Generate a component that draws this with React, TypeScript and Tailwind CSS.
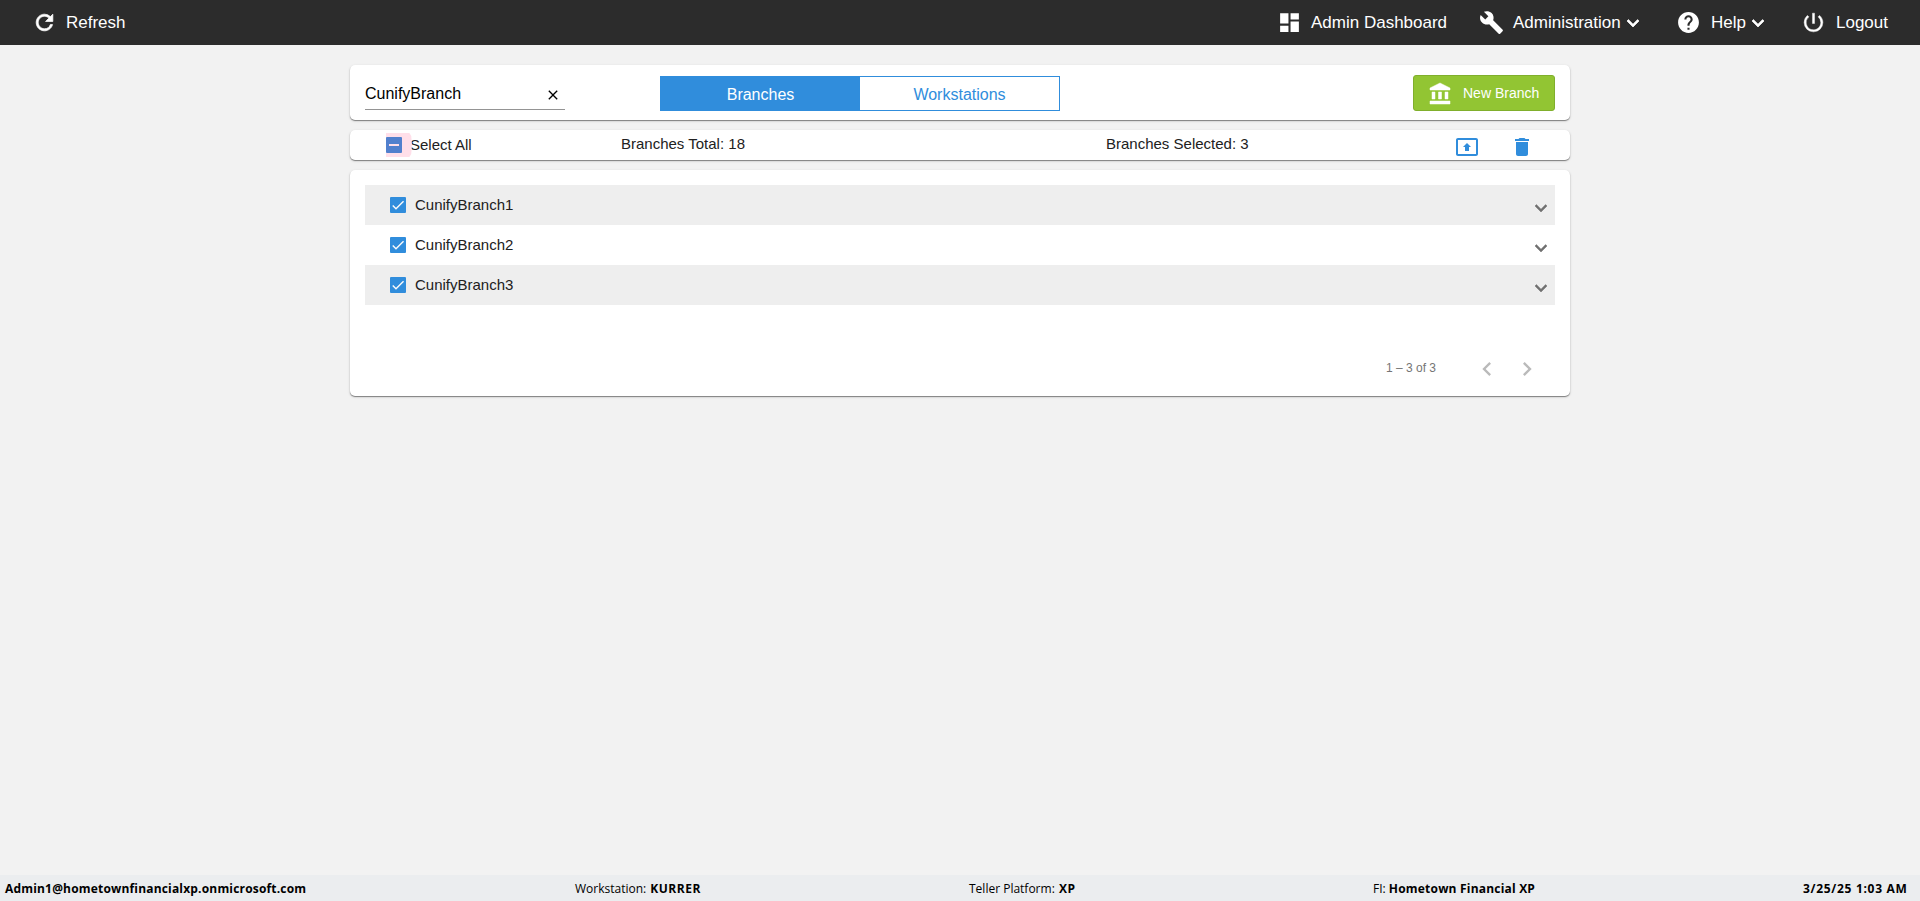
import type { ReactNode } from 'react';
import {
  MdRefresh,
  MdDashboard,
  MdBuild,
  MdHelp,
  MdPowerSettingsNew,
  MdExpandMore,
  MdClose,
  MdAccountBalance,
  MdPresentToAll,
  MdDelete,
  MdChevronLeft,
  MdChevronRight,
} from 'react-icons/md';

const branches = ['CunifyBranch1', 'CunifyBranch2', 'CunifyBranch3'];

// Thickens only the visible glyph, not the icon's transparent bounding path.
const heavy = '[&>path:last-child]:stroke-[0.7]';

function Card({ className, children }: { className: string; children: ReactNode }) {
  return (
    <section
      className={`w-[1220px] rounded-[5px] bg-white shadow-[0_1px_1px_rgba(0,0,0,0.42),0_1px_3px_rgba(0,0,0,0.14)] ${className}`}
    >
      {children}
    </section>
  );
}

function Header() {
  return (
    <header className="flex h-[45px] shrink-0 items-center bg-[#2c2c2c] pl-[32px] text-[17px] leading-[20px] text-white">
      <button className="flex items-center">
        <MdRefresh size={25} className={heavy} />
        <span className="ml-[9px]">Refresh</span>
      </button>
      <nav className="ml-auto flex items-center pr-[32px]">
        <button className="flex w-[202px] items-center">
          <MdDashboard size={25} />
          <span className="ml-[9px]">Admin Dashboard</span>
        </button>
        <button className="flex w-[197px] items-center">
          <MdBuild size={25} />
          <span className="ml-[9px] whitespace-nowrap">Administration</span>
          <MdExpandMore size={24} className={heavy} />
        </button>
        <button className="flex w-[125px] items-center">
          <MdHelp size={25} />
          <span className="ml-[10px]">Help</span>
          <MdExpandMore size={24} className={heavy} />
        </button>
        <button className="flex items-center">
          <MdPowerSettingsNew size={25} className="[&>path:last-child]:stroke-[0.4]" />
          <span className="ml-[10px]">Logout</span>
        </button>
      </nav>
    </header>
  );
}

function Toolbar() {
  return (
    <Card className="flex h-[55px] px-[15px]">
      <div className="mt-[15px] flex h-[30px] w-[200px] items-center justify-between border-b border-[#949494] pr-[4px] text-black">
        <span className="-mt-px text-[16px] leading-[20px]">CunifyBranch</span>
        <MdClose size={16} className="mt-px" />
      </div>
      <div className="mt-[11px] ml-[95px] flex h-[35px] w-[400px] border border-[#308ddc] text-[16px]">
        <button className="w-[199px] bg-[#308ddc] pt-[2px] text-white">Branches</button>
        <button className="flex-1 bg-white pt-[2px] text-[#308ddc]">Workstations</button>
      </div>
      <button className="mt-[10px] ml-auto flex h-[36px] w-[142px] items-center rounded-[3px] border border-[#80af2c] bg-[#92c533] pl-[14px] text-[14px] text-white">
        <MdAccountBalance size={24} className="mt-px [&>path:last-child]:stroke-[0.5]" />
        <span className="ml-[11px]">New Branch</span>
      </button>
    </Card>
  );
}

function SelectionBar() {
  return (
    <Card className="mt-[10px] flex h-[30px] pl-[36px] text-[15px] leading-[20px] text-[#212121]">
      <div className="flex w-[235px] items-start">
        <div className="mt-[3px] flex h-[24px] w-[26px] items-center bg-[#ffdfe9] [clip-path:polygon(0_0,90%_0,97%_12%,100%_50%,97%_88%,90%_100%,0_100%)]">
          <div className="flex size-[16px] items-center justify-center rounded-[1px] bg-[#5180cd]">
            <div className="h-[2px] w-[10px] bg-[#ffdfe9]" />
          </div>
        </div>
        <span className="mt-[5px] -ml-[2px]">Select All</span>
      </div>
      <span className="mt-[4px] w-[485px]">Branches Total: 18</span>
      <span className="mt-[4px] w-[349px]">Branches Selected: 3</span>
      <MdPresentToAll size={24} className="mt-[5px] text-[#308ddc]" />
      <MdDelete size={24} className="mt-[5px] ml-[31px] text-[#308ddc]" />
    </Card>
  );
}

function CheckedBox() {
  return (
    <div className="size-[16px] rounded-[1px] bg-[#308ddc]">
      <svg viewBox="0 0 24 24" className="size-[16px]" fill="none" stroke="#fafafa" strokeWidth="2.13">
        <path d="M4.1 12.7 9 17.6 20.3 6.3" />
      </svg>
    </div>
  );
}

function BranchList() {
  return (
    <Card className="mt-[10px] h-[226px] px-[15px] pt-[15px]">
      <ul>
        {branches.map((name) => (
          <li key={name} className="flex h-[40px] items-center pr-[2px] pl-[25px] odd:bg-[#eeeeee]">
            <CheckedBox />
            <span className="ml-[9px] text-[15px] leading-[20px] text-[#212121]">{name}</span>
            <MdExpandMore size={24} className="mt-[6px] ml-auto text-[#707070] [&>path:last-child]:stroke-[0.5]" />
          </li>
        ))}
      </ul>
      <div className="mt-[50px] flex h-[28px] items-center justify-end pr-[14px] text-[#bababa]">
        <span className="mr-[37px] -mt-[2px] text-[12px] leading-[16px] text-[#757575]">1 – 3 of 3</span>
        <MdChevronLeft size={28} />
        <MdChevronRight size={28} className="ml-[12px]" />
      </div>
    </Card>
  );
}

function StatusBar() {
  return (
    <footer className="mt-auto flex h-[26px] shrink-0 items-center whitespace-nowrap bg-[#ebedef] pt-[2px] pl-[5px] font-['Open_Sans','Noto_Sans',sans-serif] text-[12px] leading-[16px] text-black">
      <b className="w-[570px] font-bold tracking-[0.18px]">Admin1@hometownfinancialxp.onmicrosoft.com</b>
      <span className="w-[394px]">
        Workstation: <b className="ml-px tracking-[0.5px]">KURRER</b>
      </span>
      <span className="w-[404px]">
        Teller Platform: <b className="ml-px tracking-[0.5px]">XP</b>
      </span>
      <span className="w-[430px]">
        FI: <b className="tracking-[0.2px]">Hometown Financial XP</b>
      </span>
      <b className="tracking-[0.7px]">3/25/25 1:03 AM</b>
    </footer>
  );
}

export default function App() {
  return (
    <div className="flex h-[901px] w-[1920px] flex-col overflow-hidden bg-[#f2f2f2] font-['Liberation_Sans',Arial,sans-serif]">
      <Header />
      <main className="flex flex-col items-center pt-[20px]">
        <Toolbar />
        <SelectionBar />
        <BranchList />
      </main>
      <StatusBar />
    </div>
  );
}
